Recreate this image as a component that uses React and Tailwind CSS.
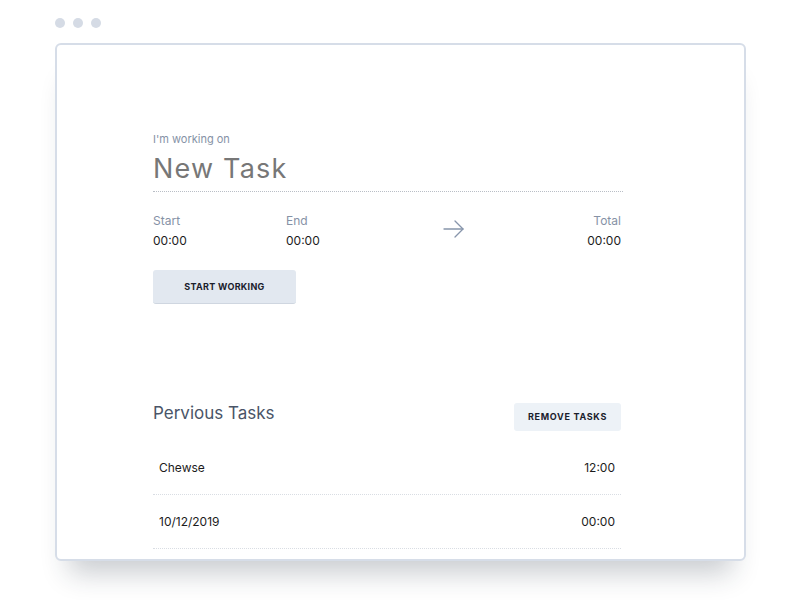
import React from 'react';

const tasks = [
  { id: 1, name: 'Chewse', time: '12:00' },
  { id: 2, name: '10/12/2019', time: '00:00' },
];

const App = () => {
  return (
    <div className="min-h-screen bg-white px-[55px] pt-[18px] font-['Inter',sans-serif]">
      <div className="flex gap-2">
        <span className="h-[10px] w-[10px] rounded-full bg-[#d5dbe5]" />
        <span className="h-[10px] w-[10px] rounded-full bg-[#d5dbe5]" />
        <span className="h-[10px] w-[10px] rounded-full bg-[#d5dbe5]" />
      </div>

      <div className="mt-[15px] h-[518px] w-[691px] rounded-md border-2 border-[#d6dde8] bg-white pl-[96px] pt-[87px] shadow-[0_26px_26px_-14px_rgba(30,40,60,0.24)]">
        <div className="w-[470px]">
          <p className="text-[11px] leading-[14px] text-[#8692a6]">I'm working on</p>
          <div className="mt-[7px] border-b border-dotted border-[#b9bec6] pb-[6px]">
            <h1 className="text-[27px] leading-[32px] tracking-[1.2px] text-[#777777]">New Task</h1>
          </div>

          <div className="mt-[21px] flex items-start text-[12px] leading-[16px]">
            <div className="w-[133px]">
              <p className="text-[#8692a6]">Start</p>
              <p className="mt-[4px] text-[#1c1c1c]">00:00</p>
            </div>
            <div className="w-[157px]">
              <p className="text-[#8692a6]">End</p>
              <p className="mt-[4px] text-[#1c1c1c]">00:00</p>
            </div>
            <svg width="22" height="18" viewBox="0 0 22 18" className="mt-[7px]" fill="none" stroke="#8795ab" strokeWidth="1.3" strokeLinecap="round" strokeLinejoin="round">
              <path d="M1 9h19" />
              <path d="M12 1l8 8-8 8" />
            </svg>
            <div className="flex-1 pr-[2px] text-right">
              <p className="text-[#8692a6]">Total</p>
              <p className="mt-[4px] text-[#1c1c1c]">00:00</p>
            </div>
          </div>

          <button
            type="button"
            className="mt-[21px] h-[34px] w-[143px] rounded-[3px] border-b border-[#cfd6e0] bg-[#e2e8f0] text-[9px] font-bold tracking-[0.3px] text-[#1a202c]"
          >
            START WORKING
          </button>

          <div className="mt-[97px] flex items-start justify-between pr-[2px]">
            <h2 className="text-[17px] leading-[24px] text-[#4a5568]">Pervious Tasks</h2>
            <button
              type="button"
              className="mt-[2px] h-[28px] w-[107px] rounded-[3px] bg-[#edf2f7] text-[9px] font-bold tracking-[0.7px] text-[#1a202c]"
            >
              REMOVE TASKS
            </button>
          </div>

          <div className="mt-[10px] pr-[2px]">
            {tasks.map((task) => (
              <div
                key={task.id}
                className="flex h-[54px] items-center justify-between border-b border-dotted border-[#d9dde3] px-[6px] text-[12px] text-[#1c1c1c]"
              >
                <span>{task.name}</span>
                <span>{task.time}</span>
              </div>
            ))}
          </div>
        </div>
      </div>
    </div>
  );
};

export default App;
